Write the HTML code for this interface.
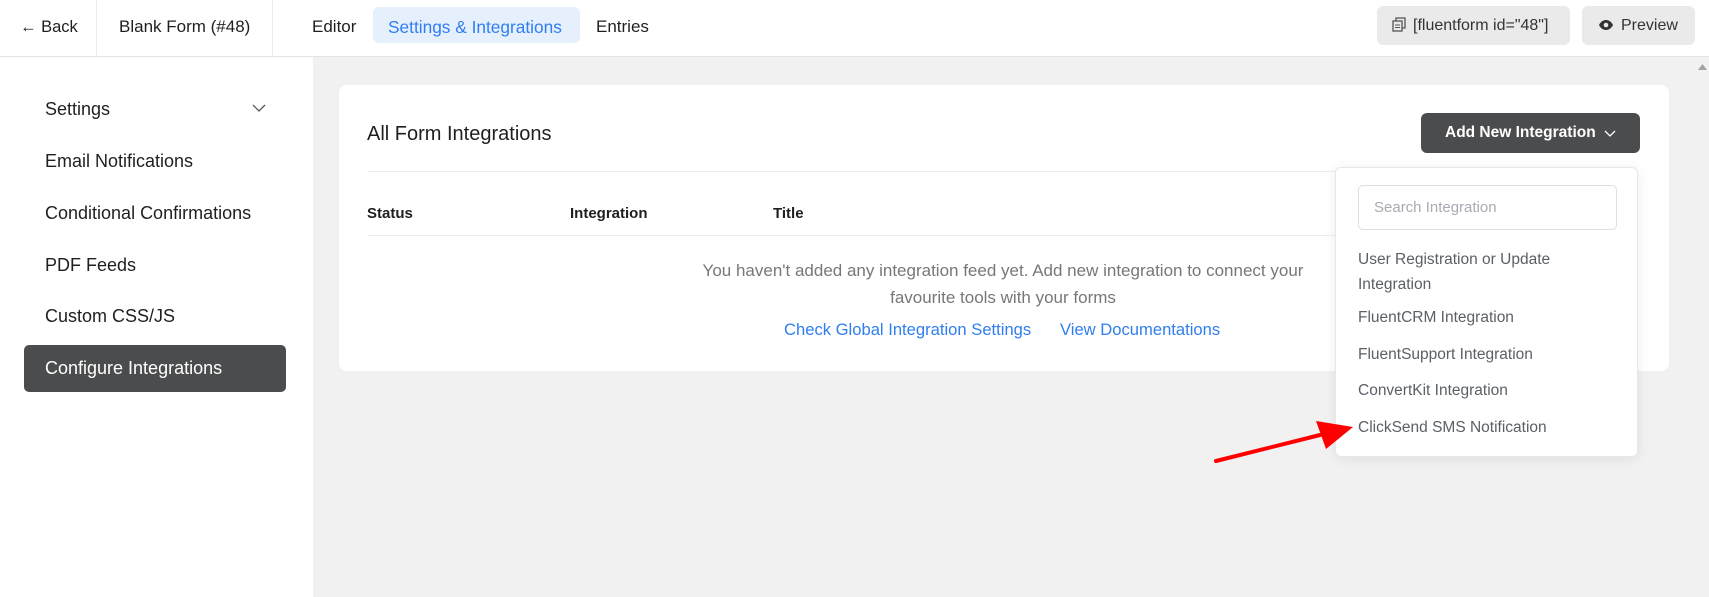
<!DOCTYPE html>
<html><head><style>
*{box-sizing:border-box;margin:0;padding:0}
body{width:1709px;height:597px;overflow:hidden;background:#f1f1f1;font-family:"Liberation Sans",sans-serif;color:#1e1f21;position:relative}
.abs{position:absolute;white-space:nowrap}
.hdr{position:absolute;left:0;top:0;width:1709px;height:57px;background:#fff;border-bottom:1px solid #e4e4e4}
.side{position:absolute;left:0;top:57px;width:313px;height:540px;background:#fff}
.si{position:absolute;left:45px;font-size:18px;color:#1e1f21}
.card{position:absolute;left:339px;top:85px;width:1330px;height:286px;background:#fff;border-radius:8px}
.dd{position:absolute;left:1335px;top:167px;width:303px;height:290px;background:#fff;border:1px solid #e8e8e8;border-radius:6px;box-shadow:0 2px 12px rgba(0,0,0,.08)}
.di{position:absolute;left:22px;font-size:15.5px;color:#5b5f66}
</style></head><body>
<div class="hdr">
  <div class="abs" style="left:20px;top:18px;font-size:16.5px">← Back</div>
  <div class="abs" style="left:96px;top:0;width:1px;height:57px;background:#ececec"></div>
  <div class="abs" style="left:119px;top:17px;font-size:17px">Blank Form (#48)</div>
  <div class="abs" style="left:272px;top:0;width:1px;height:57px;background:#ececec"></div>
  <div class="abs" style="left:312px;top:17px;font-size:17px">Editor</div>
  <div class="abs" style="left:373px;top:7px;width:207px;height:36px;background:#e6f0fd;border-radius:6px"></div>
  <div class="abs" style="left:388px;top:17px;font-size:17.3px;color:#2f7ef0">Settings &amp; Integrations</div>
  <div class="abs" style="left:596px;top:17px;font-size:17px">Entries</div>
  <div class="abs" style="left:1377px;top:6px;width:193px;height:39px;background:#eaeaea;border-radius:6px"></div>
  <svg class="abs" style="left:1392px;top:17px" width="15" height="15" viewBox="0 0 15 15"><rect x="1" y="4" width="9" height="10" fill="none" stroke="#555" stroke-width="1.3"/><path d="M4 4V1h9v10h-3" fill="none" stroke="#555" stroke-width="1.3"/><path d="M3 8h5M3 10.5h5" stroke="#555"/></svg>
  <div class="abs" style="left:1413px;top:17px;font-size:16px;color:#333">[fluentform id="48"]</div>
  <div class="abs" style="left:1582px;top:6px;width:113px;height:39px;background:#eaeaea;border-radius:6px"></div>
  <svg class="abs" style="left:1598px;top:19px" width="16" height="12" viewBox="0 0 16 12"><path d="M1 6C3 2 6 1 8 1s5 1 7 5c-2 4-5 5-7 5S3 10 1 6z" fill="#333"/><circle cx="8" cy="6" r="2.3" fill="#eaeaea"/></svg>
  <div class="abs" style="left:1621px;top:17px;font-size:16px;color:#333">Preview</div>
</div>
<div class="side">
  <div class="si" style="top:42px">Settings</div>
  <svg class="abs" style="left:252px;top:47px" width="14" height="8"><path d="M1 1l6 6 6-6" stroke="#555" fill="none" stroke-width="1.3"/></svg>
  <div class="si" style="top:94px">Email Notifications</div>
  <div class="si" style="top:146px">Conditional Confirmations</div>
  <div class="si" style="top:198px">PDF Feeds</div>
  <div class="si" style="top:249px">Custom CSS/JS</div>
  <div class="abs" style="left:24px;top:288px;width:262px;height:47px;background:#4b4c4d;border-radius:5px"></div>
  <div class="si" style="top:301px;color:#fff">Configure Integrations</div>
</div>
<div class="abs" style="left:1695px;top:57px;width:14px;height:540px;background:#f1f1f1"></div>
<svg class="abs" style="left:1698px;top:64px" width="9" height="6"><path d="M0 6L4.5 0 9 6z" fill="#a3a3a3"/></svg>
<div class="card">
  <div class="abs" style="left:28px;top:38px;font-size:20px;color:#1e1f21">All Form Integrations</div>
  <div class="abs" style="left:1082px;top:28px;width:219px;height:40px;background:#4b4c4d;border-radius:6px"></div>
  <div class="abs" style="left:1106px;top:39px;font-size:15.5px;color:#fff;font-weight:bold">Add New Integration</div>
  <svg class="abs" style="left:1265px;top:45px" width="12" height="7"><path d="M1 1l5 5 5-5" stroke="#fff" fill="none" stroke-width="1.3"/></svg>
  <div class="abs" style="left:28px;top:86px;width:1000px;height:1px;background:#ececec"></div>
  <div class="abs" style="left:28px;top:120px;font-size:15px;font-weight:bold;color:#1e1f21">Status</div>
  <div class="abs" style="left:231px;top:120px;font-size:15px;font-weight:bold;color:#1e1f21">Integration</div>
  <div class="abs" style="left:434px;top:120px;font-size:15px;font-weight:bold;color:#1e1f21">Title</div>
  <div class="abs" style="left:28px;top:150px;width:1000px;height:1px;background:#ececec"></div>
  <div class="abs" style="left:354px;top:172px;font-size:17px;color:#777;text-align:center;line-height:27px;white-space:normal;width:620px">You haven't added any integration feed yet. Add new integration to connect your favourite tools with your forms</div>
  <div class="abs" style="left:445px;top:235px;font-size:16.6px;color:#2f7ef0">Check Global Integration Settings</div>
  <div class="abs" style="left:721px;top:235px;font-size:16.6px;color:#2f7ef0">View Documentations</div>
</div>
<div class="dd">
  <div class="abs" style="left:22px;top:17px;width:259px;height:45px;border:1px solid #dcdfe6;border-radius:5px"></div>
  <div class="abs" style="left:38px;top:31px;font-size:15px;color:#a8abb2">Search Integration</div>
  <div class="di" style="top:79px;line-height:25px">User Registration or Update<br>Integration</div>
  <div class="di" style="top:141px">FluentCRM Integration</div>
  <div class="di" style="top:178px">FluentSupport Integration</div>
  <div class="di" style="top:214px">ConvertKit Integration</div>
  <div class="di" style="top:251px">ClickSend SMS Notification</div>
</div>
<svg class="abs" style="left:0;top:0" width="1709" height="597"><path d="M1216 461L1320 435" stroke="#f00" stroke-width="4" stroke-linecap="round"/><path d="M1353 427L1316 421L1326 449z" fill="#f00"/></svg>
</body></html>
